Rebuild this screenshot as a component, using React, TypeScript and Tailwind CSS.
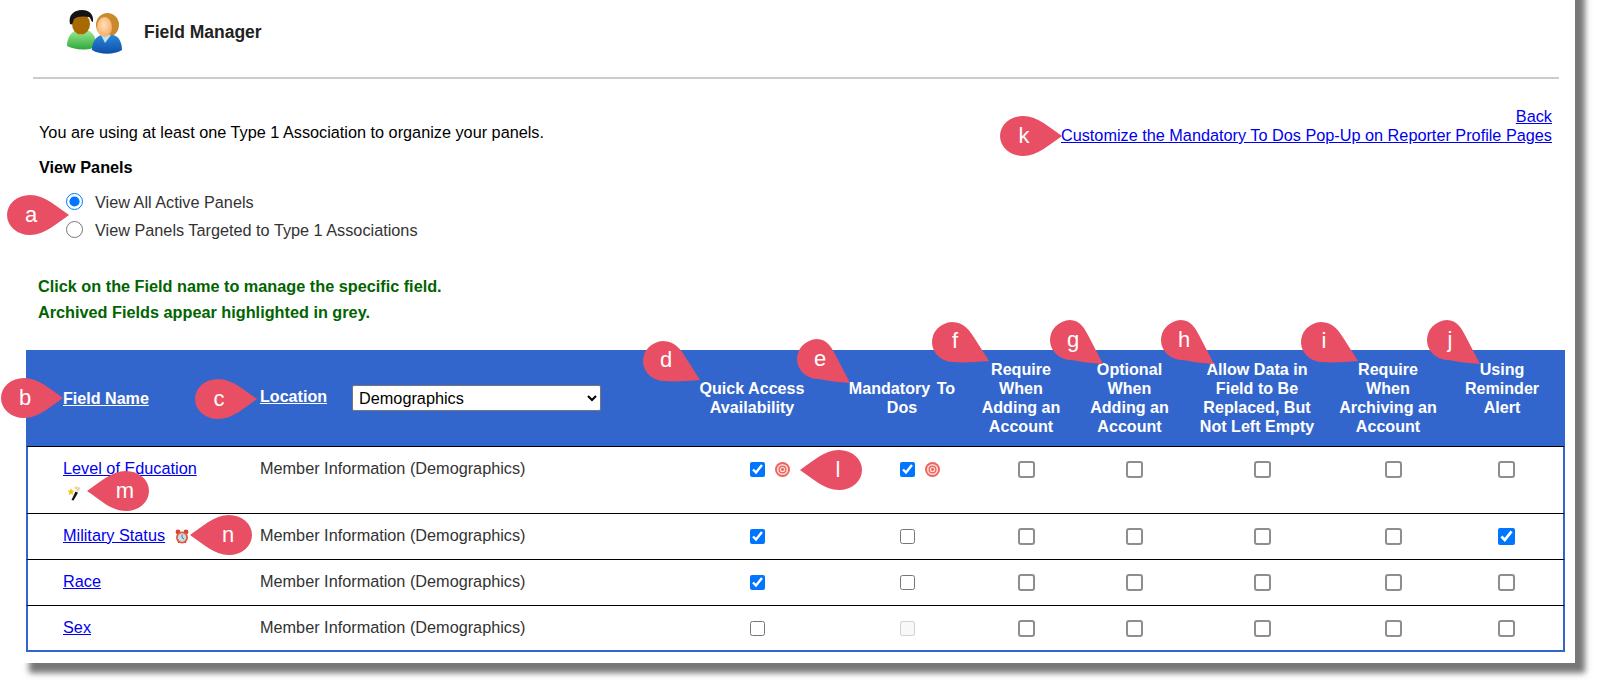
import React from "react";

function Drop({ letter, dir, narrow, className }: { letter: string; dir: "right" | "left" | "down"; narrow?: boolean; className: string }) {
    return (
        <div className={"absolute " + className}>
            {dir === "right" && (
                <svg width="62" height="40" viewBox="0 0 62 40" className="block">
                    <path d="M62 20C50 12 38 0 23 0A23 20 0 0 0 23 40C38 40 50 28 62 20Z" fill="#e94f64" />
                </svg>
            )}
            {dir === "left" && (
                <svg width="62" height="40" viewBox="0 0 62 40" className="block">
                    <path d="M0 20C12 12 24 0 39 0A23 20 0 0 1 39 40C24 40 12 28 0 20Z" fill="#e94f64" />
                </svg>
            )}
            {dir === "down" && !narrow && (
                <svg width="58" height="42" viewBox="0 0 58 42" className="block">
                    <path d="M21 1C33 1 39 10 44 18L58 40C45 41 32 42 23 41A21 20 0 0 1 21 1Z" fill="#e94f64" />
                </svg>
            )}
            {dir === "down" && narrow && (
                <svg width="54" height="44" viewBox="0 0 54 44" className="block">
                    <path d="M21 0C31 0 36 9 40 17L54 44C42 43 32 42 23 40A21 20 0 0 1 21 0Z" fill="#e94f64" />
                </svg>
            )}
            <span className={"absolute top-[20px] -translate-y-1/2 -translate-x-1/2 text-[22px] leading-none text-white " + (dir === "left" ? "left-[38px]" : "left-[24px]")}>
                {letter}
            </span>
        </div>
    );
}

function PeopleIcon() {
    return (
        <svg width="58" height="46" viewBox="0 0 58 46" className="mt-[2px] block">
            <defs>
                <linearGradient id="greenBody" x1="0" y1="0" x2="0" y2="1">
                    <stop offset="0" stopColor="#9cec94" />
                    <stop offset="1" stopColor="#2fa83a" />
                </linearGradient>
                <linearGradient id="blueBody" x1="0" y1="0" x2="0" y2="1">
                    <stop offset="0" stopColor="#2c86d8" />
                    <stop offset="1" stopColor="#0d4fa8" />
                </linearGradient>
                <radialGradient id="faceLight" cx="0.45" cy="0.4" r="0.7">
                    <stop offset="0" stopColor="#ffe0b8" />
                    <stop offset="1" stopColor="#f4a458" />
                </radialGradient>
            </defs>
            <path d="M1 36C1 27 6 21 11 20H20C26 21 30 27 30 33V37C20 41 9 40 1 36Z" fill="url(#greenBody)" />
            <path d="M9 20L15 25L22 20L19 18H11Z" fill="#d4f2cc" />
            <ellipse cx="15" cy="14" rx="9" ry="10.5" fill="#a86a00" />
            <path d="M4 14C2 5 8 0 16 0C23 0 28 4 27 12C25 12 25 8 23 7C18 6 11 6 8 9C7 11 7 16 4 14Z" fill="#141414" />
            <ellipse cx="41.5" cy="15" rx="11.5" ry="12" fill="#c98a2e" />
            <path d="M26 40C26 32 30 26 36 25H47C53 26 56 33 56 40C48 45 34 45 26 40Z" fill="url(#blueBody)" />
            <path d="M35 25L39 33L45 25Z" fill="#bfe3f2" />
            <ellipse cx="38.5" cy="17" rx="7.5" ry="10" fill="url(#faceLight)" />
        </svg>
    );
}

function TargetIcon() {
    return (
        <svg width="15" height="15" viewBox="0 0 15 15" className="block">
            <circle cx="7.5" cy="7.5" r="7.5" fill="#f0635c" />
            <circle cx="7.5" cy="7.5" r="5.6" fill="#fbd9d4" />
            <circle cx="7.5" cy="7.5" r="4" fill="#ee6a63" />
            <circle cx="7.5" cy="7.5" r="2.6" fill="#fde6e2" />
            <circle cx="7.5" cy="7.5" r="1.4" fill="#ec5a54" />
        </svg>
    );
}

function WandIcon() {
    return (
        <svg width="16" height="16" viewBox="0 0 16 16" className="block">
            <path d="M4.5 15L8.5 6.5L11 7.8L6.5 15.5Z" fill="#111" />
            <path d="M9 5.5L11 1.5L13.5 3L11.2 7Z" fill="#d8d8d8" />
            <path d="M4 3L5 5.5L7.5 5.8L5.7 7.5L6.2 10L4 8.7L1.8 10L2.3 7.5L.5 5.8L3 5.5Z" fill="#f5c518" />
            <path d="M9 .5L9.6 2L11 2.2L10 3.2L10.2 4.6L9 4L7.8 4.6L8 3.2L7 2.2L8.4 2Z" fill="#f9d94e" />
        </svg>
    );
}

function ClockIcon() {
    return (
        <svg width="14" height="15" viewBox="0 0 14 15" className="block">
            <circle cx="3" cy="3" r="2.4" fill="#d9432f" />
            <circle cx="11" cy="3" r="2.4" fill="#d9432f" />
            <circle cx="7" cy="8.5" r="6" fill="#e2593f" />
            <circle cx="7" cy="8.5" r="4.2" fill="#c9dce6" />
            <path d="M7 5.5V8.5L9 10" stroke="#55707f" strokeWidth="1" fill="none" />
            <path d="M3 14L4.5 12.5M11 14L9.5 12.5" stroke="#b8392a" strokeWidth="1" />
        </svg>
    );
}

function Check({ on, big, disabled, target }: { on?: boolean; big?: boolean; disabled?: boolean; target?: boolean }) {
    let box = "block h-[15px] w-[15px]";
    if (big) {
        box = on
            ? "block h-[17px] w-[17px]"
            : "block h-[17px] w-[17px] appearance-none rounded-[3px] border-2 border-[#8e8e8e] bg-white";
    }
    return (
        <div className={"flex justify-center pl-[10px] " + (big ? "pt-[14px]" : "pt-[15px]")}>
            <span className="relative block">
                <input type="checkbox" defaultChecked={on} disabled={disabled} className={box} />
                {target && (
                    <span className="absolute left-[25px] top-0">
                        <TargetIcon />
                    </span>
                )}
            </span>
        </div>
    );
}

const rows = [
    { name: "Level of Education", height: "h-[67px]", marks: [true, true, false, false, false, false, false], extra: "wand" },
    { name: "Military Status", height: "h-[46px]", marks: [true, false, false, false, false, false, true], extra: "clock" },
    { name: "Race", height: "h-[46px]", marks: [true, false, false, false, false, false, false], extra: "" },
    { name: "Sex", height: "h-[47px]", marks: [false, false, false, false, false, false, false], extra: "" },
];

export default function App() {
    return (
        <div className="relative h-[686px] w-[1598px] overflow-hidden bg-white font-['Liberation_Sans',Arial,sans-serif] text-[16.25px]">
            <div className="ml-[19px] -mt-[20px] h-[683px] w-[1556px] bg-white pt-[20px] shadow-[10px_10px_6px_#777]">
                <div className="flex h-[64px] items-center pl-[47px]">
                    <PeopleIcon />
                    <p className="ml-[20px] text-[17.5px] font-bold text-[#222]">Field Manager</p>
                </div>
                <hr className="mt-[13px] ml-[14px] w-[1526px] border-0 h-[2px] bg-[#ccc]" />

                <div className="flex justify-between pl-[20px] pr-[23px]">
                    <div>
                        <p className="mt-[41px] text-black">You are using at least one Type 1 Association to organize your panels.</p>
                        <p className="mt-[11px] font-bold text-black">View Panels</p>
                        <div className="mt-[8px] ml-[27px] text-[#333]">
                            <label className="flex h-[28px] items-center gap-[12px]">
                                <input type="radio" name="view" defaultChecked className="h-[17px] w-[17px]" />
                                View All Active Panels
                            </label>
                            <label className="flex h-[28px] items-center gap-[12px]">
                                <input type="radio" name="view" className="h-[17px] w-[17px]" />
                                View Panels Targeted to Type 1 Associations
                            </label>
                        </div>
                    </div>
                    <div className="mt-[28px] text-right leading-[19px]">
                        <a href="#" className="block text-[#0000ee] underline">Back</a>
                        <a href="#" className="block text-[#0000ee] underline">Customize the Mandatory To Dos Pop-Up on Reporter Profile Pages</a>
                    </div>
                </div>

                <div className="mt-[29px] ml-[19px] font-bold leading-[26px] text-[#006400]">
                    <p>Click on the Field name to manage the specific field.</p>
                    <p>Archived Fields appear highlighted in grey.</p>
                </div>

                <table className="mt-[25px] ml-[7px] w-[1539px] table-fixed border-separate border-spacing-0">
                    <colgroup>
                        <col className="w-[229px]" />
                        <col className="w-[405px]" />
                        <col className="w-[184px]" />
                        <col className="w-[116px]" />
                        <col className="w-[122px]" />
                        <col className="w-[95px]" />
                        <col className="w-[160px]" />
                        <col className="w-[102px]" />
                        <col className="w-[126px]" />
                    </colgroup>
                    <thead>
                        <tr className="h-[96px] bg-[#3366cc] text-center text-[16.1px] font-bold leading-[19px] text-white">
                            <th className="pl-[37px] pt-[2px] text-left">
                                <a href="#" className="underline">Field Name</a>
                            </th>
                            <th className="pl-[5px] text-left font-bold">
                                <div className="flex items-center">
                                    <a href="#" className="-mt-[3px] underline">Location</a>
                                    <select className="ml-[25px] h-[26px] w-[249px] rounded-[2px] border border-[#767676] bg-white pl-[2px] text-[16.25px] font-normal text-black">
                                        <option>Demographics</option>
                                    </select>
                                </div>
                            </th>
                            <th>Quick Access<br />Availability</th>
                            <th>Mandatory <span className="ml-[2px]">To</span><br />Dos</th>
                            <th>Require<br />When<br />Adding an<br />Account</th>
                            <th>Optional<br />When<br />Adding an<br />Account</th>
                            <th>Allow Data in<br />Field to Be<br />Replaced, But<br />Not Left Empty</th>
                            <th>Require<br />When<br />Archiving an<br />Account</th>
                            <th>Using<br />Reminder<br />Alert<br />&nbsp;</th>
                        </tr>
                    </thead>
                    <tbody>
                        {rows.map((row, i) => {
                            const last = i === rows.length - 1;
                            const cell = "align-top border-t border-black " + (last ? "border-b-2 border-b-[#3366cc]" : "");
                            return (
                                <tr key={row.name} className={row.height}>
                                    <td className={cell + " border-l-2 border-l-[#3366cc] pl-[35px] pt-[9px]"}>
                                        <div className="flex items-center">
                                            <a href="#" className="text-[#0000ee] underline">{row.name}</a>
                                            {row.extra === "clock" && (
                                                <span className="ml-[10px] mt-[3px]"><ClockIcon /></span>
                                            )}
                                        </div>
                                        {row.extra === "wand" && (
                                            <span className="mt-[5px] ml-[4px] block"><WandIcon /></span>
                                        )}
                                    </td>
                                    <td className={cell + " pl-[5px] pt-[9px] text-[#333]"}>Member Information (Demographics)</td>
                                    <td className={cell}><Check on={row.marks[0]} target={i === 0} /></td>
                                    <td className={cell}><Check on={row.marks[1]} target={i === 0} disabled={last} /></td>
                                    <td className={cell}><Check big on={row.marks[2]} /></td>
                                    <td className={cell}><Check big on={row.marks[3]} /></td>
                                    <td className={cell}><Check big on={row.marks[4]} /></td>
                                    <td className={cell}><Check big on={row.marks[5]} /></td>
                                    <td className={cell + " border-r-2 border-r-[#3366cc]"}><Check big on={row.marks[6]} /></td>
                                </tr>
                            );
                        })}
                    </tbody>
                </table>
            </div>

            <Drop letter="a" dir="right" className="left-[7px] top-[195px]" />
            <Drop letter="b" dir="right" className="left-[1px] top-[378px]" />
            <Drop letter="c" dir="right" className="left-[195px] top-[379px]" />
            <Drop letter="k" dir="right" className="left-[1000px] top-[116px]" />
            <Drop letter="l" dir="left" className="left-[800px] top-[450px]" />
            <Drop letter="m" dir="left" className="left-[87px] top-[471px]" />
            <Drop letter="n" dir="left" className="left-[190px] top-[515px]" />
            <Drop letter="d" dir="down" className="left-[642px] top-[340px]" />
            <Drop letter="e" dir="down" narrow className="left-[796px] top-[339px]" />
            <Drop letter="f" dir="down" className="left-[931px] top-[321px]" />
            <Drop letter="g" dir="down" narrow className="left-[1049px] top-[320px]" />
            <Drop letter="h" dir="down" narrow className="left-[1160px] top-[320px]" />
            <Drop letter="i" dir="down" className="left-[1300px] top-[321px]" />
            <Drop letter="j" dir="down" narrow className="left-[1426px] top-[320px]" />
        </div>
    );
}
